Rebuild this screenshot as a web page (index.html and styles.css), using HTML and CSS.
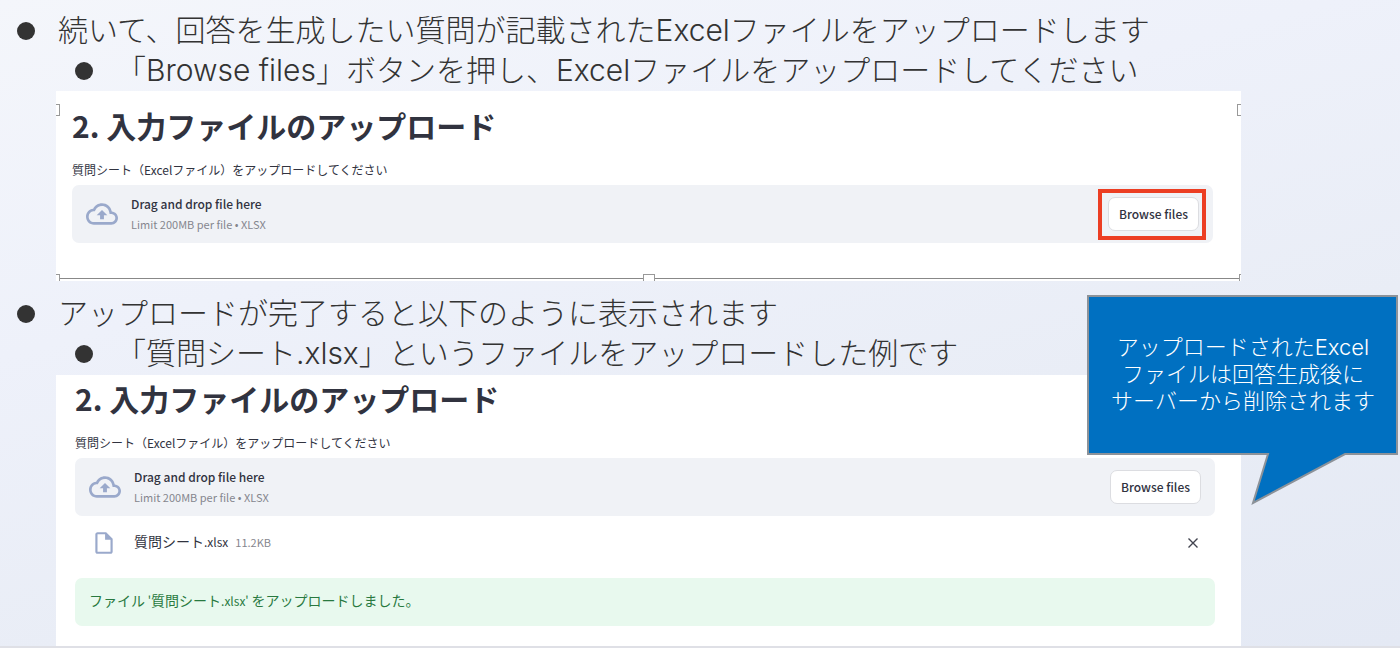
FILE: index.html
```
<!DOCTYPE html>
<html lang="ja">
<head>
    <meta charset="UTF-8">
    <title>入力ファイルのアップロード</title>
    <link rel="stylesheet" href="styles.css">
</head>
<body>
<div class="slide">
    <ul class="steps">
        <li>続いて、回答を生成したい質問が記載されたExcelファイルをアップロードします
            <ul>
                <li>「Browse files」ボタンを押し、Excelファイルをアップロードしてください</li>
            </ul>
        </li>
    </ul>

    <div class="panel before">
        <h2>2. 入力ファイルのアップロード</h2>
        <label class="title" for="browse1">質問シート（Excelファイル）をアップロードしてください</label>
        <div class="dropzone">
            <svg class="cloud" viewBox="0 0 24 24"><path d="M19.35 10.04C18.67 6.59 15.64 4 12 4 9.11 4 6.6 5.64 5.35 8.04 2.34 8.36 0 10.91 0 14c0 3.31 2.69 6 6 6h13c2.76 0 5-2.24 5-5 0-2.64-2.05-4.78-4.65-4.96zM19 18H6c-2.21 0-4-1.79-4-4 0-2.05 1.53-3.76 3.56-3.97l1.07-.11.5-.95C8.08 7.14 9.94 6 12 6c2.62 0 4.88 1.86 5.39 4.43l.3 1.5 1.53.11c1.56.1 2.78 1.41 2.78 2.96 0 1.65-1.35 3-3 3zM8 13h2.55v3h2.9v-3H16l-4-4z"/></svg>
            <div class="hint">
                <p>Drag and drop file here</p>
                <small>Limit 200MB per file • XLSX</small>
            </div>
            <div class="marked">
                <button type="button" class="browse" id="browse1">Browse files</button>
            </div>
        </div>
        <!-- 選択枠 -->
        <span class="handle top-left"></span>
        <span class="handle top-right"></span>
        <div class="frame-line">
            <span class="handle bottom-left"></span>
            <span class="handle bottom-center"></span>
            <span class="handle bottom-right"></span>
        </div>
    </div>

    <ul class="steps second">
        <li>アップロードが完了すると以下のように表示されます
            <ul>
                <li>「質問シート.xlsx」というファイルをアップロードした例です</li>
            </ul>
        </li>
    </ul>

    <div class="panel after">
        <h2>2. 入力ファイルのアップロード</h2>
        <label class="title" for="browse2">質問シート（Excelファイル）をアップロードしてください</label>
        <div class="dropzone">
            <svg class="cloud" viewBox="0 0 24 24"><path d="M19.35 10.04C18.67 6.59 15.64 4 12 4 9.11 4 6.6 5.64 5.35 8.04 2.34 8.36 0 10.91 0 14c0 3.31 2.69 6 6 6h13c2.76 0 5-2.24 5-5 0-2.64-2.05-4.78-4.65-4.96zM19 18H6c-2.21 0-4-1.79-4-4 0-2.05 1.53-3.76 3.56-3.97l1.07-.11.5-.95C8.08 7.14 9.94 6 12 6c2.62 0 4.88 1.86 5.39 4.43l.3 1.5 1.53.11c1.56.1 2.78 1.41 2.78 2.96 0 1.65-1.35 3-3 3zM8 13h2.55v3h2.9v-3H16l-4-4z"/></svg>
            <div class="hint">
                <p>Drag and drop file here</p>
                <small>Limit 200MB per file • XLSX</small>
            </div>
            <button type="button" class="browse" id="browse2">Browse files</button>
        </div>
        <div class="file">
            <svg class="doc" viewBox="0 0 24 24"><path d="M14 2H6c-1.1 0-1.99.9-1.99 2L4 20c0 1.1.89 2 1.99 2H18c1.1 0 2-.9 2-2V8l-6-6zM6 20V4h7v5h5v11H6z"/></svg>
            <p><span class="name">質問シート<span class="ext">.xlsx</span></span><small>11.2KB</small></p>
            <button type="button" class="remove" aria-label="削除">
                <svg viewBox="0 0 10 10"><path d="M0.5 0.5L9.5 9.5M9.5 0.5L0.5 9.5"/></svg>
            </button>
        </div>
        <p class="success">ファイル<span class="ext"> '</span>質問シート<span class="ext">.xlsx' </span>をアップロードしました。</p>
    </div>

    <div class="callout">
        <svg viewBox="0 0 312 210"><path d="M1 1H310V159H258L166 208L181 159H1Z"/></svg>
        <p>アップロードされたExcel<br>ファイルは回答生成後に<br>サーバーから削除されます</p>
    </div>
</div>
</body>
</html>
```
FILE: styles.css
```
* {
    padding: 0;
    margin: 0;
    box-sizing: border-box;
    list-style: none;
}

body {
    font-family: "Noto Sans CJK JP", sans-serif;
    color: #31333f;
    background: #e9edf6;
}

.slide {
    position: relative;
    min-height: 100vh;
    padding-top: 10px;
    border-bottom: 2px solid #dfe0e6;
    background: linear-gradient(165deg, #f4f6fb 0%, #eef1fa 35%, #e9edf6 65%, #e4e9f4 100%);
}

/* 箇条書き */
.steps {
    padding-left: 58px;
    padding-bottom: 1px;
    font-family: Inter, "Noto Sans CJK JP", sans-serif;
    font-size: 30px;
    font-weight: 300;
    line-height: 40px;
    color: #333;
}

.steps.second {
    padding-top: 12px;
    padding-bottom: 2px;
}

.steps li {
    position: relative;
}

.steps li li {
    margin-left: 58px;
}

.steps li::before {
    content: "";
    position: absolute;
    left: -41px;
    top: 12px;
    width: 18px;
    height: 18px;
    border-radius: 50%;
    background: #333;
}

/* アップロード画面 */
.panel {
    position: relative;
    margin: 0 159px 0 56px;
    background: #fff;
}

.before {
    padding: 12px 28px 38px 16px;
}

.after {
    padding: 1px 26px 20px 19px;
}

.panel h2 {
    font-size: 30px;
    font-weight: 700;
    line-height: 44px;
    margin-bottom: 13px;
}

.title {
    display: block;
    font-size: 12px;
    line-height: 20px;
    margin-bottom: 5px;
}

.dropzone {
    display: flex;
    align-items: center;
    gap: 13px;
    height: 58px;
    padding: 0 14px;
    border-radius: 7px;
    background: #f0f2f6;
}

.cloud {
    width: 32px;
    height: 32px;
    fill: #9aa9cb;
}

.hint {
    flex: 1;
    line-height: 20px;
}

.hint p {
    font-size: 12px;
    font-weight: 500;
}

small {
    display: block;
    font-size: 11px;
    color: #85868e;
}

.browse {
    width: 91px;
    height: 34px;
    padding-bottom: 2px;
    border: 1px solid #dcdde1;
    border-radius: 7px;
    background: #fff;
    color: #31333f;
    font-family: inherit;
    font-size: 12px;
    font-weight: 500;
}

.marked {
    position: relative;
}

.marked::after {
    content: "";
    position: absolute;
    inset: -8px -7px -9px -10px;
    border: 4px solid #ec3e23;
    pointer-events: none;
}

/* 選択枠のハンドル */
.handle {
    position: absolute;
    border: 1px solid #999;
    background: #fff;
}

.top-left,
.top-right {
    top: 13px;
    width: 4px;
    height: 12px;
}

.top-left,
.bottom-left {
    left: 0;
    border-left: 0;
}

.top-right,
.bottom-right {
    right: 0;
    border-right: 0;
}

.frame-line {
    position: absolute;
    left: 0;
    right: 0;
    bottom: 2px;
    height: 1px;
    background: #888;
}

.frame-line .handle {
    bottom: -2px;
    height: 7px;
    border-bottom: 0;
}

.bottom-left {
    width: 4px;
}

.bottom-right {
    width: 2px;
}

.bottom-center {
    left: 50%;
    width: 12px;
    margin-left: -6px;
}

/* アップロード済みファイル */
.file {
    display: flex;
    align-items: center;
    height: 54px;
    margin-bottom: 8px;
    padding: 0 16px;
}

.doc {
    width: 26px;
    height: 26px;
    margin-right: 17px;
    fill: #9aa9cb;
}

.file p {
    display: flex;
    flex: 1;
    align-items: baseline;
    gap: 7px;
    padding-bottom: 5px;
}

.name {
    font-size: 14px;
    line-height: 20px;
}

.ext {
    font-size: 12px;
    line-height: 1;
}

.remove {
    display: flex;
    border: 0;
    background: none;
}

.remove svg {
    width: 12px;
    height: 12px;
    padding: 1px;
    stroke: #42444f;
    stroke-width: 1.4;
}

.success {
    padding: 10px 14px 14px;
    border-radius: 7px;
    background: #e8f9ee;
    color: #28793f;
    font-size: 14px;
    line-height: 24px;
}

/* 吹き出し */
.callout {
    position: absolute;
    top: 295px;
    right: 1px;
    width: 312px;
}

.callout svg {
    display: block;
    fill: #0070c1;
    stroke: #8c9299;
    stroke-width: 2;
}

.callout p {
    position: absolute;
    top: 39px;
    left: 0;
    right: 0;
    color: #fff;
    font-family: Inter, "Noto Sans CJK JP", sans-serif;
    font-size: 22px;
    font-weight: 300;
    line-height: 27px;
    text-align: center;
}
```
